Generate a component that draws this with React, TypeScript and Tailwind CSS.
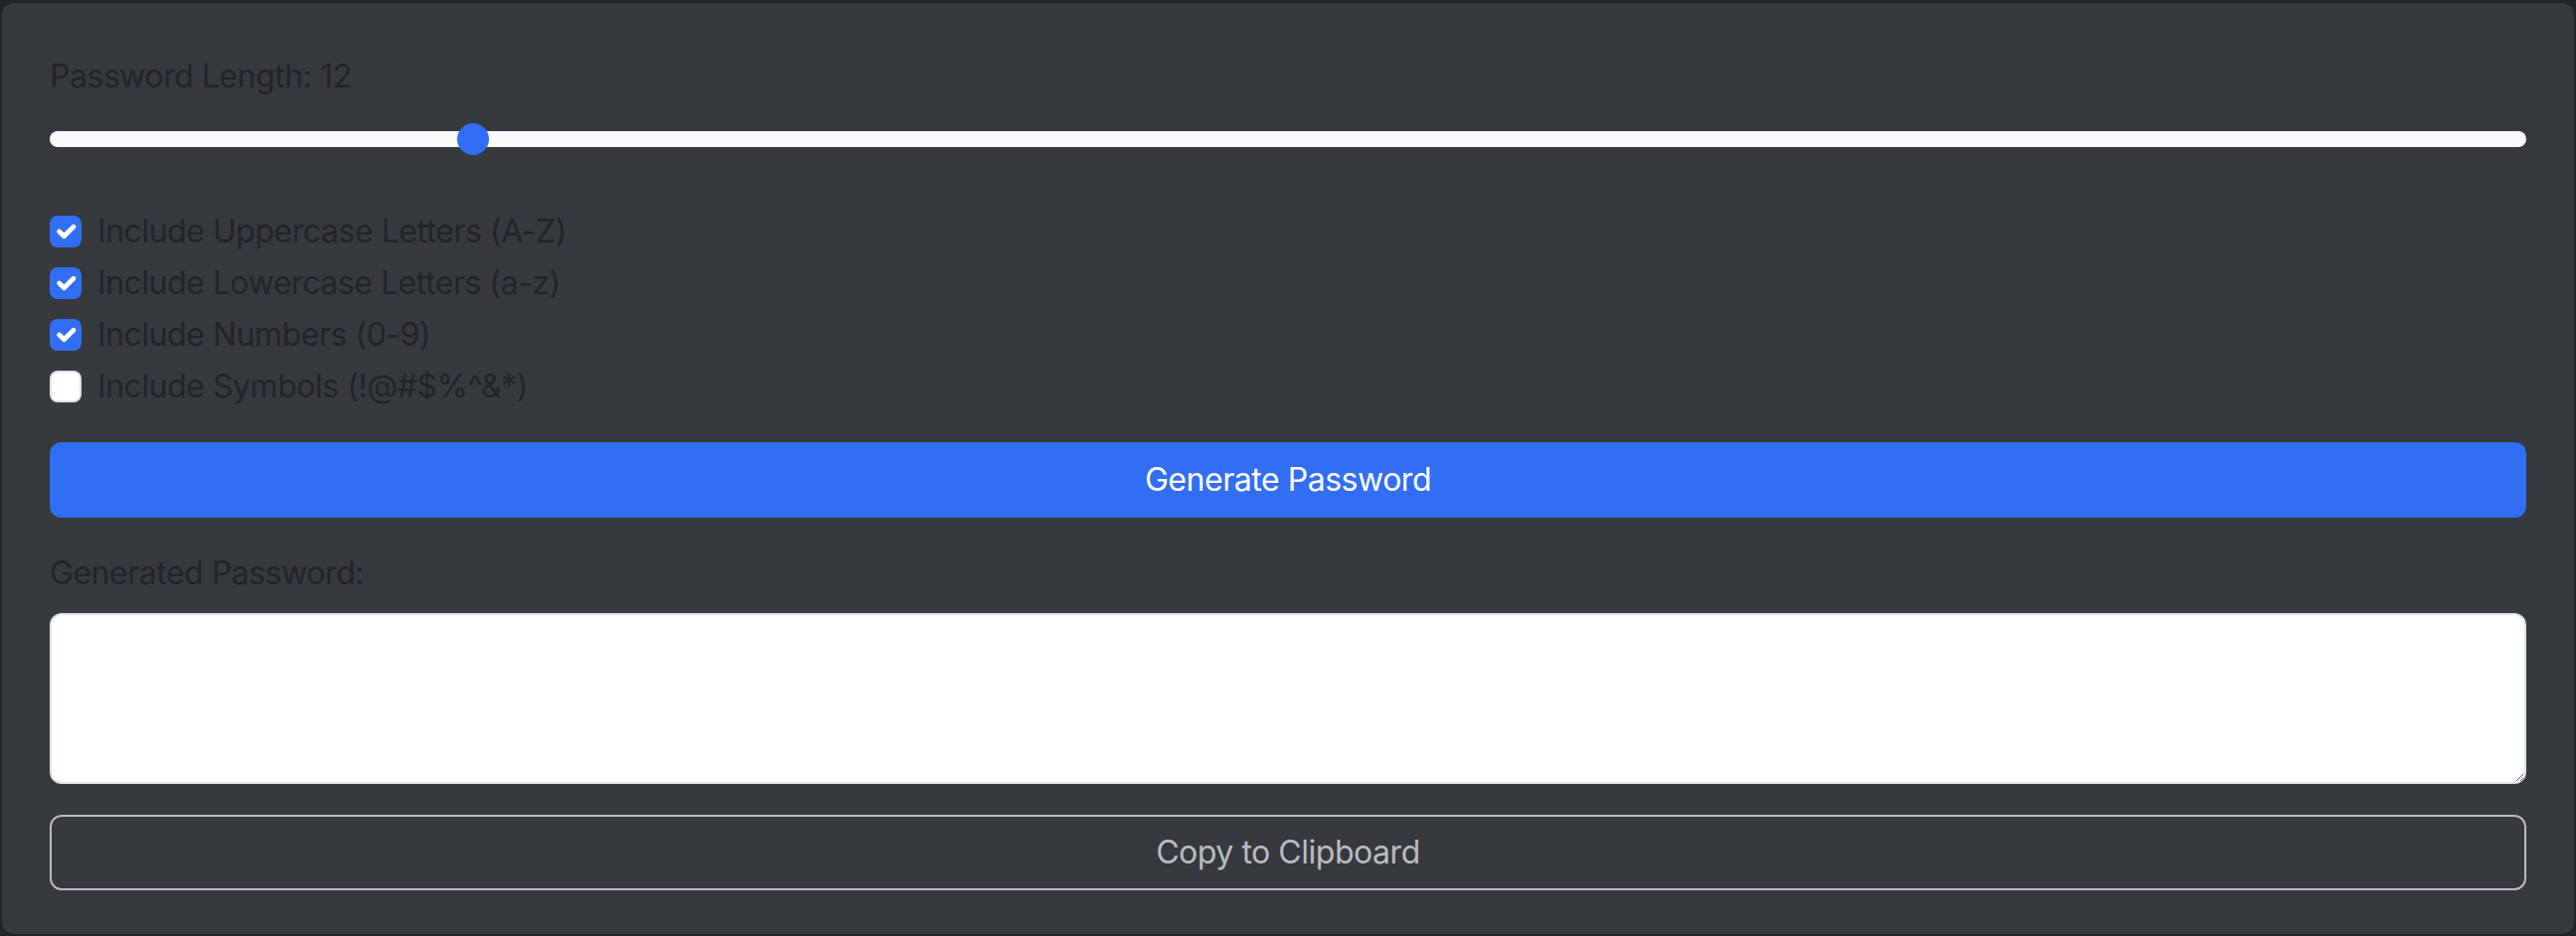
import React from "react";

const FONT = {
  fontFamily: "Inter, 'Liberation Sans', sans-serif",
  letterSpacing: "-0.029em",
};

type OptionRowProps = {
  label: string;
  checked: boolean;
};

function CheckMark() {
  return (
    <svg viewBox="0 0 20 20" className="h-full w-full">
      <path
        d="m6 10 3 3 6-6"
        fill="none"
        stroke="#fff"
        strokeWidth="3"
        strokeLinecap="round"
        strokeLinejoin="round"
      />
    </svg>
  );
}

function OptionRow({ label, checked }: OptionRowProps) {
  return (
    <div className="flex h-[48px] items-center gap-[16px]">
      <span
        className={
          checked
            ? "h-[32px] w-[32px] shrink-0 rounded-[8px] bg-[#316ef3]"
            : "h-[32px] w-[32px] shrink-0 rounded-[8px] border-2 border-[#dee2e6] bg-white"
        }
      >
        {checked && <CheckMark />}
      </span>
      <span className="text-[32px] leading-[48px] text-[#212529]">{label}</span>
    </div>
  );
}

function LengthSlider({ value, min, max }: { value: number; min: number; max: number }) {
  const frac = (value - min) / (max - min);
  return (
    <div className="flex h-[48px] items-center">
      <div className="relative h-[16px] w-full rounded-full bg-[#f8f9fa]">
        <span
          className="absolute top-1/2 h-[32px] w-[32px] -translate-y-1/2 rounded-full bg-[#316ef3]"
          style={{ left: `calc((100% - 32px) * ${frac})` }}
        />
      </div>
    </div>
  );
}

export default function App() {
  const options = [
    { label: "Include Uppercase Letters (A-Z)", checked: true },
    { label: "Include Lowercase Letters (a-z)", checked: true },
    { label: "Include Numbers (0-9)", checked: true },
    { label: "Include Symbols (!@#$%^&*)", checked: false },
  ];

  return (
    <div className="min-h-screen bg-[#212529] px-[2px] pt-[3px]" style={FONT}>
      <div className="rounded-[12px] bg-[#36393e] px-[48px] pb-[44px] pt-[50px]">
        <label className="mb-[15px] block text-[32px] leading-[48px] text-[#212529]">
          Password Length: 12
        </label>
        <LengthSlider value={12} min={8} max={32} />

        <div className="mt-[45px] flex flex-col gap-[4px]">
          {options.map((o) => (
            <OptionRow key={o.label} label={o.label} checked={o.checked} />
          ))}
        </div>

        <button className="mt-[32px] flex h-[76px] w-full items-center justify-center rounded-[12px] bg-[#316ef3] text-[32px] text-white">
          Generate Password
        </button>

        <label className="mt-[32px] mb-[16px] block text-[32px] leading-[48px] text-[#212529]">
          Generated Password:
        </label>
        <textarea
          readOnly
          className="block h-[172px] w-full rounded-[12px] border-2 border-[#dee2e6] bg-white px-[24px] py-[12px] text-[32px] outline-none"
        />

        <button className="mt-[31px] flex h-[76px] w-full items-center justify-center rounded-[12px] border-2 border-[#b9bbbe] text-[32px] text-[#b9bcc0]">
          Copy to Clipboard
        </button>
      </div>
    </div>
  );
}
